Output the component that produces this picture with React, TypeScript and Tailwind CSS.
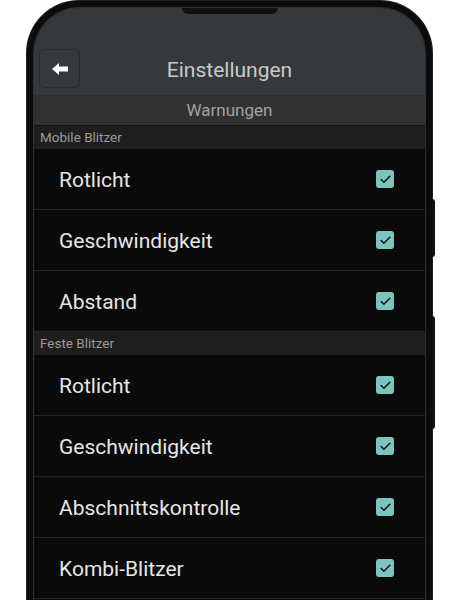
import { Check } from "lucide-react";

const mobile = ["Rotlicht", "Geschwindigkeit", "Abstand"];
const fixed = ["Rotlicht", "Geschwindigkeit", "Abschnittskontrolle", "Kombi-Blitzer"];

function BackArrow() {
  return (
    <svg width="16" height="12" viewBox="0 0 16 12" className="text-white">
      <path d="M0 6 L7 0 L7 3.5 L16 3.5 L16 8.5 L7 8.5 L7 12 Z" fill="currentColor" />
    </svg>
  );
}

function Row({ label }: { label: string }) {
  return (
    <div className="flex h-[61px] items-center justify-between border-b border-[#232323] bg-[#0a0a0a] pl-[25px] pr-[31px]">
      <span className="pt-[4px] text-[21px] text-[#e6e6e6]">{label}</span>
      <span className="flex h-[18px] w-[18px] items-center justify-center rounded-[3px] bg-[#7cc5be]">
        <Check size={13} strokeWidth={2.75} className="text-[#111]" />
      </span>
    </div>
  );
}

function Section({ title, items }: { title: string; items: string[] }) {
  return (
    <div>
      <div className="flex h-[23px] items-center bg-[#1e1e1e] px-[6px] text-[13.5px] text-[#9a9a9a]">
        {title}
      </div>
      {items.map((label, i) => (
        <Row key={i} label={label} />
      ))}
    </div>
  );
}

export default function App() {
  return (
    <div className="h-[600px] w-[458px] overflow-hidden bg-white" style={{ fontFamily: "Roboto, 'Noto Sans', sans-serif" }}>
      <div className="relative ml-[27px] mt-[1px] h-[680px] w-[405px] rounded-[52px] bg-[#0c0c0c] p-[6px] ring-1 ring-[#222]">
        {/* side buttons */}
        <div className="absolute right-[-3px] top-[198px] h-[58px] w-[3px] rounded-r bg-[#111]" />
        <div className="absolute right-[-3px] top-[315px] h-[113px] w-[3px] rounded-r bg-[#111]" />

        <div className="relative h-full overflow-hidden rounded-[46px] border border-[#2e3134] bg-[#0a0a0a]">
          {/* notch */}
          <div className="absolute left-1/2 top-0 z-10 h-[6px] w-[96px] -translate-x-1/2 rounded-b-[6px] bg-[#111]" />

          <div className="flex h-[87px] items-end bg-[#35393c] px-[5px] pb-[7px]">
            <button className="flex h-[39px] w-[41px] items-center justify-center rounded-[5px] border border-[#2a2d30]">
              <BackArrow />
            </button>
            <div className="flex-1 pb-[2px] text-center text-[21px] text-[#c9c9c9]">Einstellungen</div>
            <div className="w-[41px]" />
          </div>
          <div className="flex h-[30px] items-center justify-center border-t border-[#2b2e31] bg-[#313131] text-[17px] text-[#a3a3a3]">
            Warnungen
          </div>
          <div className="h-[1px] bg-[#101010]" />

          <Section title="Mobile Blitzer" items={mobile} />
          <Section title="Feste Blitzer" items={fixed} />
        </div>
      </div>
    </div>
  );
}
